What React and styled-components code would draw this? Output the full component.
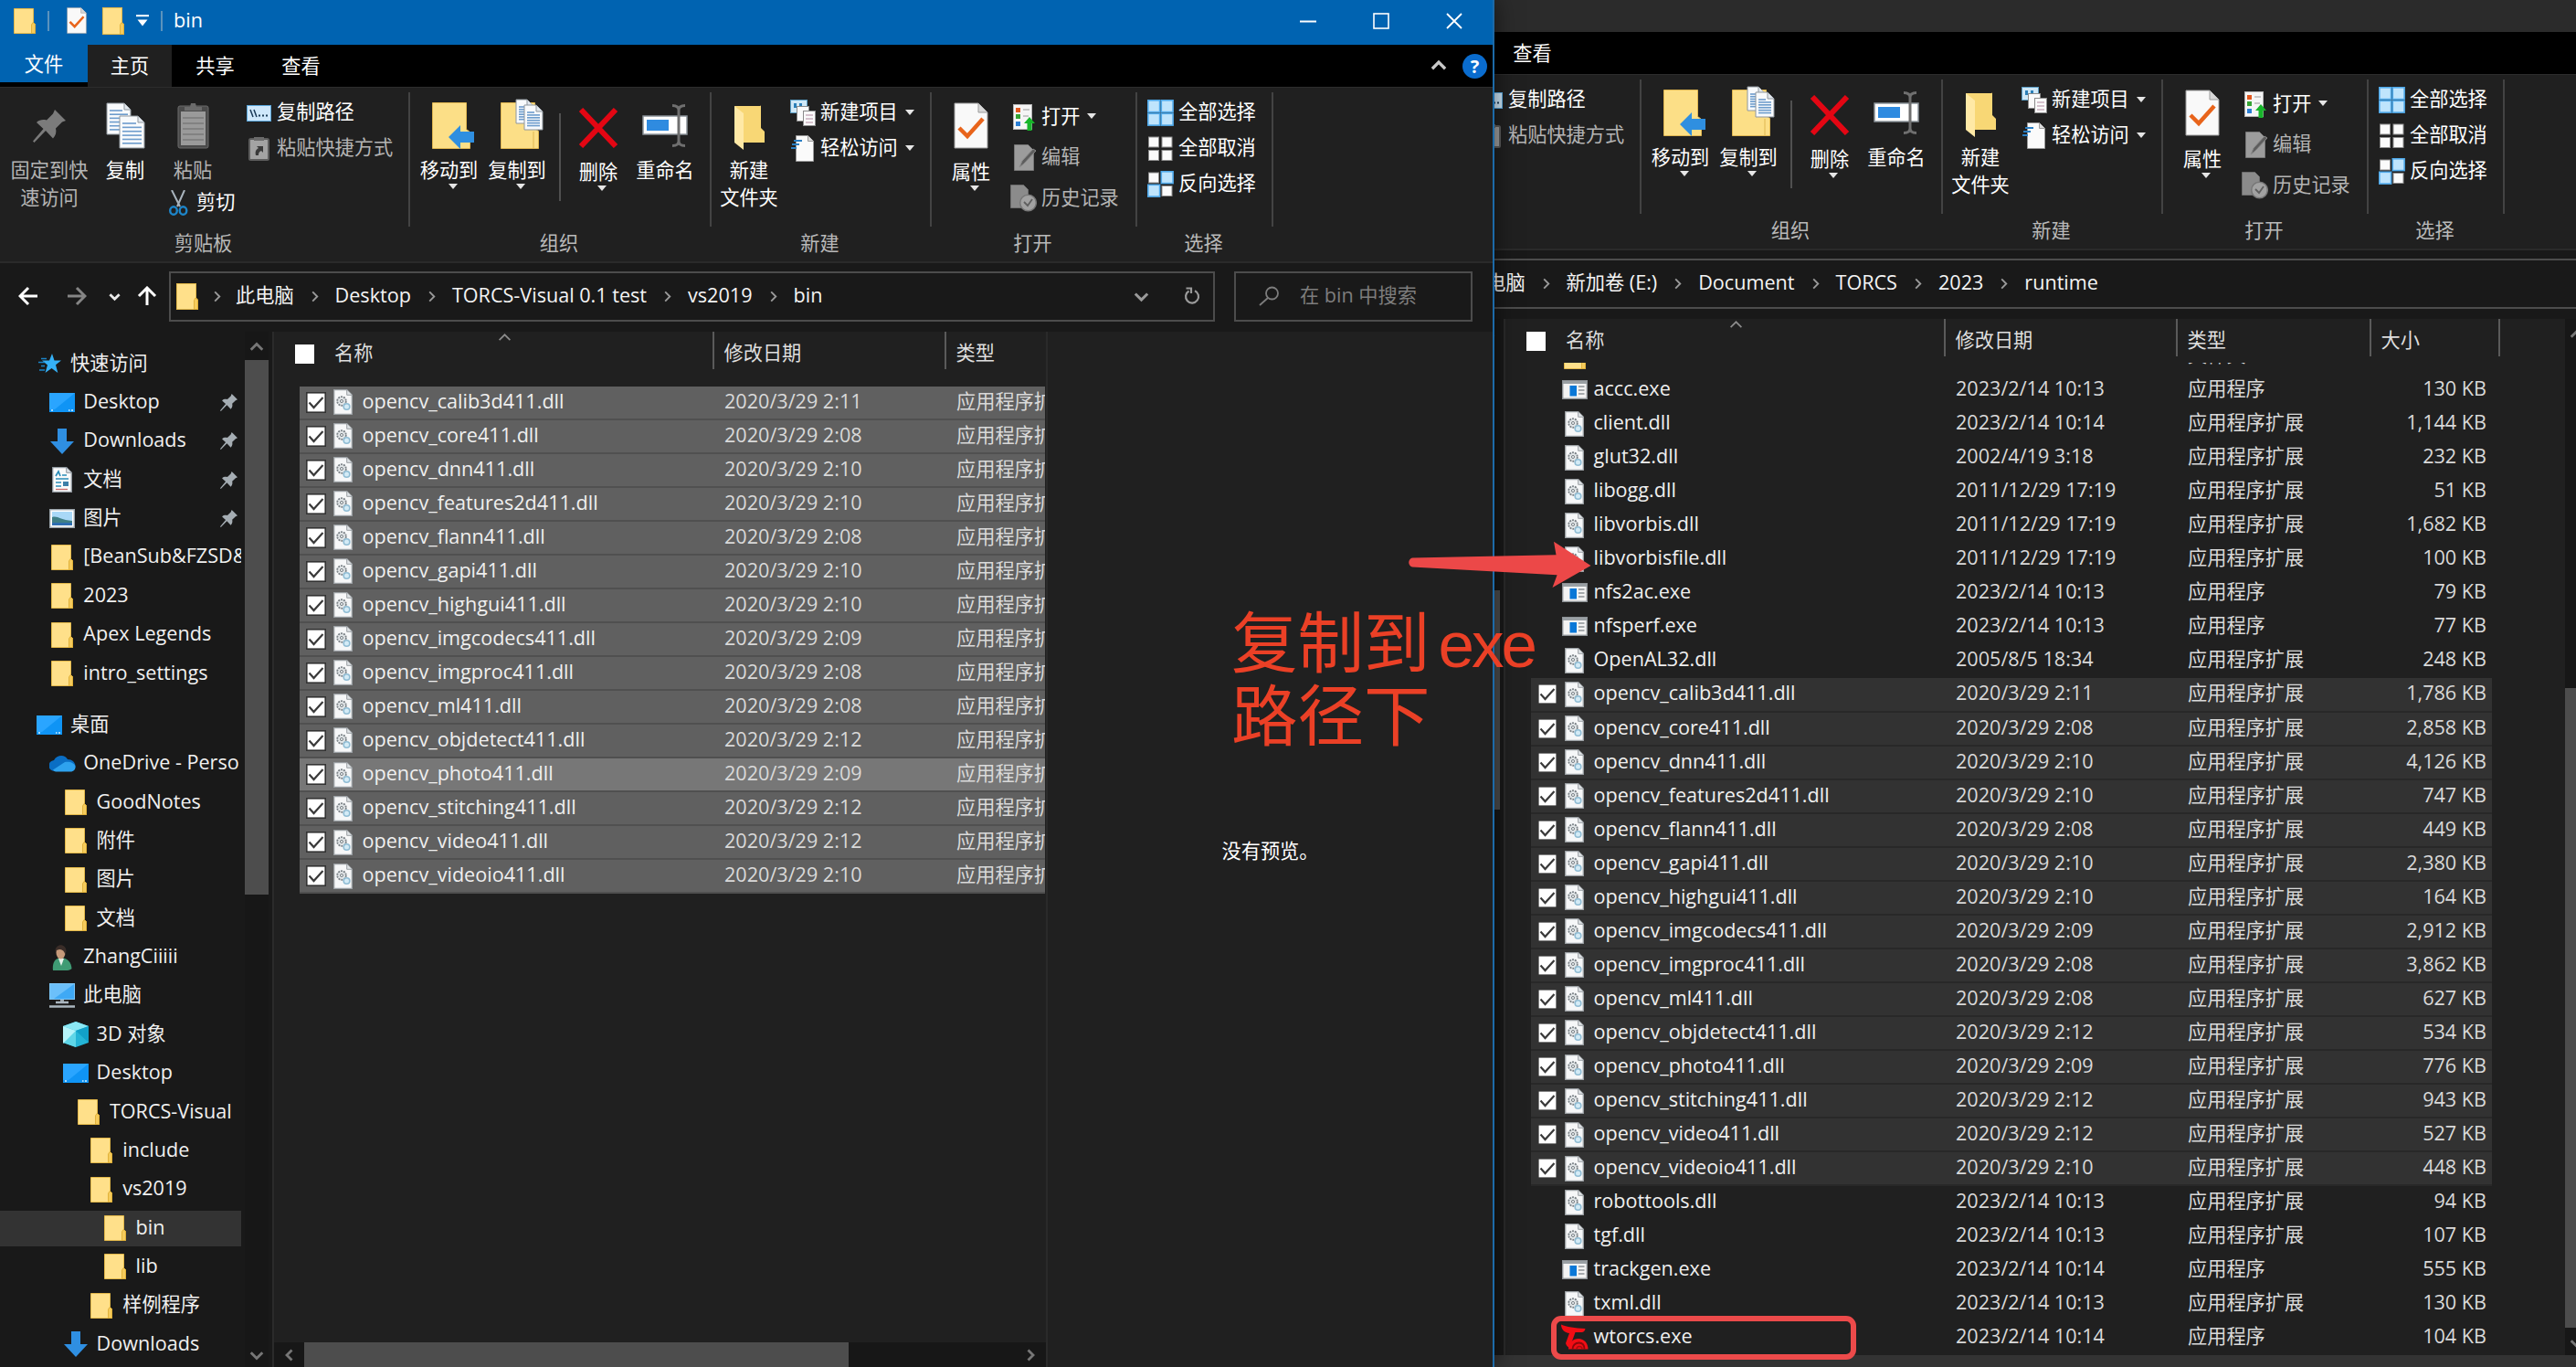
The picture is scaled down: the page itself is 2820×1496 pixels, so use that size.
import React from "react";
import styled, { createGlobalStyle } from "styled-components";

const GlobalStyle = createGlobalStyle`
    * {
        box-sizing: border-box;
    }

    body {
        margin: 0;
        background: #191919;
        color: #f0f0f0;
        font-family: "Open Sans", "Noto Sans CJK SC", sans-serif;
        font-size: 21.2px;
        overflow: hidden;
    }

    svg {
        display: block;
        flex: none;
    }
`;

const Desktop = styled.div`
    position: relative;
    width: 2820px;
    height: 1496px;
    overflow: hidden;
    background: #191919;
`;

const WindowFrame = styled.div`
    position: absolute;
    left: ${p => p.$left}px;
    top: ${p => p.$top}px;
    width: ${p => p.$width}px;
    height: ${p => p.$height}px;
    display: flex;
    flex-direction: column;
    background: #202020;
    border-right: 2px solid #1c6aa8;
    box-shadow: 0 0 24px rgba(0, 0, 0, 0.55);
`;

const Latin = styled.span`
    font-size: 21.6px;
    line-height: 1;
`;

/* ---------- title bar ---------- */

const TitleBar = styled.div`
    height: 49px;
    flex: none;
    display: flex;
    align-items: center;
    padding: 0 33px 4px 15px;
    background: ${p => (p.$active ? "#0063b1" : "#2b2b2b")};
`;

const TitleTools = styled.div`
    display: flex;
    align-items: center;
    flex: 1;
`;

const TitleRule = styled.div`
    width: 2px;
    height: 22px;
    margin: ${p => p.$margin};
    background: #5b93bd;
`;

const TitleSpace = styled.div`
    width: ${p => p.$width}px;
`;

const TitleText = styled.div`
    font-size: 21.6px;
    line-height: 28px;
    padding-bottom: 2px;
    color: #fff;
`;

const Controls = styled.div`
    display: flex;
    align-items: center;
    gap: 62px;
`;

/* ---------- tabs ---------- */

const TabBar = styled.div`
    height: 46px;
    flex: none;
    display: flex;
    align-items: flex-start;
    background: #000;
`;

const Tab = styled.div`
    width: ${p => p.$width}px;
    height: ${p => (p.$kind === "file" ? 41 : 46)}px;
    line-height: ${p => (p.$kind === "file" ? 41 : 45)}px;
    text-align: center;
    color: #fff;
    background: ${p => (p.$kind === "file" ? "#0063b1" : p.$kind === "current" ? "#202020" : "transparent")};
`;

const TabEnd = styled.div`
    margin-left: auto;
    height: 46px;
    padding-right: 6px;
    display: flex;
    align-items: center;
    gap: 17px;
`;

const Help = styled.div`
    width: 27px;
    height: 27px;
    border-radius: 50%;
    background: #0a6cce;
    color: #fff;
    font-size: 20px;
    font-weight: 700;
    line-height: 27px;
    text-align: center;
`;

/* ---------- ribbon ---------- */

const RibbonBar = styled.div`
    height: 193px;
    flex: none;
    display: flex;
    background: #202020;
    border-top: 1px solid #2d2d2d;
    border-bottom: 2px solid #2a2a2a;
`;

const Group = styled.div`
    width: ${p => p.$width}px;
    height: 187px;
    flex: none;
    display: flex;
    flex-direction: column;
    background: linear-gradient(#434343, #434343) right 5px / 2px 147px no-repeat;
    background-position: right 0 top 5px;
`;

const GroupBody = styled.div`
    height: 150px;
    padding: 13px 0 0 ${p => p.$pad}px;
    display: flex;
    align-items: flex-start;
`;

const GroupName = styled.div`
    height: 37px;
    padding-right: 4px;
    line-height: 39px;
    text-align: center;
    color: #b9b9b9;
`;

const BigButton = styled.div`
    width: ${p => p.$width}px;
    flex: none;
    display: flex;
    flex-direction: column;
    align-items: center;
    padding-top: ${p => p.$drop || 0}px;
    color: ${p => (p.$off ? "#b4b4b4" : "#fff")};
    line-height: 30px;
    white-space: nowrap;
`;

const BigIcon = styled.div`
    height: ${p => 62 - (p.$drop || 0)}px;
    padding-bottom: ${p => (p.$low || 9) - 1}px;
    display: flex;
    align-items: flex-end;
`;

const BigArrow = styled.div`
    margin-left: 8px;
`;

const Column = styled.div`
    width: 74px;
    flex: none;
`;

const SmallList = styled.div`
    margin-left: ${p => p.$gap}px;
    margin-top: ${p => p.$shift}px;
`;

const SmallButton = styled.div`
    height: ${p => p.$height}px;
    margin-left: ${p => p.$indent || 0}px;
    margin-top: ${p => p.$down || 0}px;
    display: flex;
    align-items: center;
    gap: ${p => p.$gap || 5}px;
    white-space: nowrap;
    line-height: 28px;
    color: ${p => (p.$off ? "#b4b4b4" : "#fff")};
`;

const SmallText = styled.span`
    padding-bottom: 3px;
`;

const SmallIcon = styled.div`
    width: ${p => p.$width || 29}px;
    flex: none;
    display: flex;
    justify-content: center;
`;

const DropMark = styled.div`
    margin-left: 3px;
    padding-bottom: 2px;
`;

const InnerRule = styled.div`
    width: 2px;
    height: 96px;
    margin: 15px 6px 0 9px;
    background: #505050;
`;

/* ---------- navigation bar ---------- */

const NavBar = styled.div`
    height: 75px;
    flex: none;
    display: flex;
    align-items: center;
    padding: 0 22px 3px 20px;
    background: #191919;
`;

const NavButtons = styled.div`
    width: 165px;
    display: flex;
    align-items: center;
`;

const NavGap = styled.div`
    width: ${p => p.$width}px;
`;

const Address = styled.div`
    height: 55px;
    flex: 1;
    display: flex;
    align-items: center;
    padding: 0 13px 0 6px;
    border: 2px solid #4c4c4c;
    color: #f4f4f4;
`;

const Crumb = styled.div`
    display: flex;
    align-items: center;
    white-space: nowrap;
    line-height: 30px;
`;

const BarText = styled.span`
    line-height: 30px;
    padding-bottom: 3px;
`;

const CrumbMark = styled.div`
    width: ${p => p.$width || 45}px;
    display: flex;
    justify-content: center;
`;

const AddressEnd = styled.div`
    margin-left: auto;
    display: flex;
    align-items: center;
    gap: 37px;
`;

const Search = styled.div`
    width: 261px;
    height: 55px;
    margin-left: 21px;
    padding-left: 24px;
    display: flex;
    align-items: center;
    gap: 22px;
    border: 2px solid #4c4c4c;
    color: #7d7d7d;
    white-space: nowrap;
`;

/* ---------- body ---------- */

const Body = styled.div`
    flex: 1;
    min-height: 0;
    display: flex;
`;

const Sidebar = styled.div`
    width: 300px;
    flex: none;
    display: flex;
    background: #191919;
    border-right: 2px solid #2b2b2b;
`;

const Tree = styled.div`
    width: 264px;
    padding-top: 14px;
    overflow: hidden;
`;

const TreeRow = styled.div`
    height: 42.36px;
    display: flex;
    align-items: center;
    padding-left: ${p => 40 + p.$level * 14.3}px;
    margin-top: ${p => (p.$spaced ? 14 : 0)}px;
    white-space: nowrap;
    background: ${p => (p.$current ? "linear-gradient(#333, #333) 0 2px / 100% 39px no-repeat" : "none")};
`;

const TreeIcon = styled.div`
    width: 28px;
    margin-right: 9px;
    flex: none;
    display: flex;
    justify-content: center;
`;

const TreeText = styled.div`
    flex: 1;
    min-width: 0;
    line-height: 36px;
    padding-bottom: 3px;
    overflow: hidden;
`;

const PinMark = styled.div`
    margin-right: 4px;
`;

const VerticalBar = styled.div`
    width: 26px;
    margin-left: ${p => p.$gap || 0}px;
    flex: none;
    display: flex;
    flex-direction: column;
    align-items: center;
    justify-content: space-between;
    background: #171717;
    padding: ${p => p.$pad};
`;

const VerticalThumb = styled.div`
    width: 26px;
    height: ${p => p.$height}px;
    margin-top: ${p => p.$offset}px;
    margin-bottom: auto;
    background: #4d4d4d;
`;

const ListPane = styled.div`
    width: ${p => p.$width}px;
    flex: none;
    display: flex;
    flex-direction: column;
    overflow: hidden;
`;

const ListHead = styled.div`
    position: relative;
    height: 48px;
    flex: none;
    display: flex;
    color: #dedede;
`;

const SortMark = styled.div`
    position: absolute;
    left: 245px;
    top: -1px;
`;

const HeadCell = styled.div`
    width: ${p => p.$width}px;
    height: 41px;
    flex: none;
    padding-left: ${p => p.$pad}px;
    display: flex;
    align-items: center;
    padding-top: 8px;
    border-right: 2px solid ${p => (p.$open ? "transparent" : "#5a5a5a")};
    white-space: nowrap;
`;

const HeadText = styled.span`
    line-height: 28px;
    padding-bottom: 3px;
`;

const HeadBox = styled.div`
    width: 21px;
    height: 21px;
    margin-right: 22px;
    background: #fff;
`;

const Rows = styled.div`
    flex: 1;
    min-height: 0;
    overflow: hidden;
    padding-top: ${p => p.$offset}px;
`;

const RowShift = styled.div`
    margin-top: ${p => p.$shift}px;
`;

const rowColors = {
    plain: "transparent",
    picked: "#606060",
    hover: "#777",
    dim: "#323232",
};

const Row = styled.div`
    width: ${p => p.$width}px;
    height: 37.06px;
    margin-left: 28px;
    padding-left: 7px;
    display: flex;
    align-items: center;
    background: ${p => rowColors[p.$look]};
    border-bottom: 2px solid ${p => (p.$look === "plain" ? "transparent" : p.$look === "dim" ? "#282828" : "#505050")};
    white-space: nowrap;
    line-height: 30px;
    overflow: hidden;
`;

const CheckCell = styled.div`
    width: 26px;
    flex: none;
`;

const FileIcon = styled.div`
    width: 29px;
    margin-right: 6.5px;
    flex: none;
    display: flex;
    justify-content: center;
`;

const NameCell = styled.div`
    width: 396.5px;
    flex: none;
    padding-bottom: 3px;
    color: #efefef;
`;

const Cell = styled.div`
    width: ${p => p.$width}px;
    flex: none;
    padding-bottom: 3px;
    color: #d9d9d9;
    text-align: ${p => p.$align || "left"};
`;

const HorizontalBar = styled.div`
    height: 27px;
    flex: none;
    display: flex;
    align-items: center;
    justify-content: space-between;
    padding: 0 10px 0 10px;
    background: #171717;
`;

const HorizontalThumb = styled.div`
    width: 596px;
    height: 27px;
    margin-left: 9px;
    margin-right: auto;
    background: #4d4d4d;
`;

const Preview = styled.div`
    flex: 1;
    border-left: 2px solid #2a2a2a;
    display: flex;
    justify-content: center;
    padding-top: 553px;
    color: #fff;
    line-height: 30px;
`;

const StatusBar = styled.div`
    height: 30px;
    flex: none;
    background: #333;
`;

/* ---------- annotations drawn over the desktop ---------- */

const Note = styled.div`
    position: absolute;
    left: 1348px;
    top: 665px;
    color: #eb4026;
    font-family: "Liberation Sans", "Noto Sans CJK SC", sans-serif;
    font-size: 72.5px;
    line-height: 79px;
    white-space: nowrap;
`;

const NoteLatin = styled.span`
    font-size: 71px;
    letter-spacing: -3px;
    margin-left: 9px;
`;

const Pointer = styled.svg`
    position: absolute;
    left: 1540px;
    top: 590px;
`;

const Frame = styled.div`
    position: absolute;
    left: 1698px;
    top: 1440px;
    width: 334px;
    height: 48px;
    border: 6px solid #ec4a4a;
    border-radius: 11px;
`;

/* ---------- icons ---------- */

const Folder = ({ w = 24, h = 28 }) => (
    <svg width={w} height={h} viewBox="0 0 24 28" preserveAspectRatio="none">
        <path d="M0.5 0.5h21v15l2 2v10h-23z" fill="#ffe08a" stroke="#e3b84a" />
        <path d="M21 15.5l2.5 2v10h-4V18z" fill="#f5cb5c" stroke="#dba92f" strokeWidth="0.8" />
    </svg>
);

const Chevron = ({ dir = "right", size = 14, color = "#9a9a9a", weight = 2 }) => {
    const turn = { right: 0, down: 90, left: 180, up: 270 }[dir];
    return (
        <svg width={size} height={size} viewBox="0 0 14 14">
            <path d="M4.5 1.5L10 7l-5.5 5.5" transform={`rotate(${turn} 7 7)`} fill="none" stroke={color} strokeWidth={weight} />
        </svg>
    );
};

const Triangle = ({ color = "#e6e6e6" }) => (
    <svg width="10" height="6" viewBox="0 0 10 6"><path d="M0 0h10L5 6z" fill={color} /></svg>
);

const Arrow = ({ color, up }) => (
    <svg width="22" height="22" viewBox="0 0 22 22">
        <path d="M21 11H2M11 2l-9 9 9 9" transform={up ? "rotate(90 11 11)" : ""} fill="none" stroke={color} strokeWidth="3" />
    </svg>
);

const Pin = ({ size = 36, color = "#7b7b7b" }) => (
    <svg width={size} height={size} viewBox="0 0 36 36">
        <path d="M24 0l12 12-4 1.500-7 7c1 4 0 8-3 11l-8-8.500L1.500 36 0 34.500 11.500 21 4 14c3-3 7-3.500 11-2.500l7-7z" fill={color} />
    </svg>
);

const Sheet = ({ x = 0, y = 0, w = 26, h = 34 }) => (
    <g transform={`translate(${x} ${y})`}>
        <path d={`M1 1h${w - 9}l7 7v${h - 9}h-${w - 2}z`} fill="#f8fafc" stroke="#8f979e" />
        <path d={`M${w - 8} 1v7h7`} fill="#e2e8ee" stroke="#8f979e" />
        {[0, 1, 2, 3, 4, 5].map(i => (
            <path key={i} d={`M4 ${9 + i * ((h - 13) / 5.5)}h${i === 0 ? w - 14 : w - 8}`} stroke="#6d9ccc" strokeWidth="1.600" />
        ))}
    </g>
);

const CopyIcon = () => (
    <svg width="43" height="51" viewBox="0 0 43 51">
        <Sheet w={28} h={36} />
        <Sheet x={14} y={14} w={29} h={37} />
    </svg>
);

const PasteIcon = () => (
    <svg width="35" height="51" viewBox="0 0 35 51">
        <rect x="1" y="4" width="33" height="46" rx="2" fill="#4b4b4b" stroke="#6a6a6a" />
        <rect x="4" y="10" width="27" height="37" fill="#9a9a9a" />
        <path d="M6 17h23M6 23h23M6 29h23M6 35h23M6 41h23" stroke="#7b7b7b" strokeWidth="1.500" />
        <path d="M8 9V5h6l1-4h5l1 4h6v4z" fill="#6b6b6b" />
    </svg>
);

const Scissors = () => (
    <svg width="21" height="28" viewBox="0 0 21 28">
        <path d="M3 0l9 18M17 0L9 18" stroke="#a9b4bd" strokeWidth="2" fill="none" />
        <ellipse cx="5" cy="22.500" rx="3.800" ry="4.300" fill="none" stroke="#1d85c9" strokeWidth="2.400" />
        <ellipse cx="15.500" cy="22.500" rx="3.800" ry="4.300" fill="none" stroke="#1d85c9" strokeWidth="2.400" />
    </svg>
);

const PathIcon = () => (
    <svg width="27" height="18" viewBox="0 0 27 18">
        <rect x="0.500" y="0.500" width="26" height="17" fill="#cfe8fb" stroke="#5aa7dc" />
        <path d="M4 5l3 8M8 5l3 8" stroke="#1b3a57" strokeWidth="1.500" />
        <path d="M13 11.500h2M17 11.500h2M21 11.500h2" stroke="#1b3a57" strokeWidth="2" />
    </svg>
);

const ShortcutIcon = () => (
    <svg width="23" height="27" viewBox="0 0 23 27">
        <rect x="1" y="3" width="21" height="23" rx="1.500" fill="#a3a3a3" stroke="#5d5d5d" strokeWidth="2" />
        <path d="M6 1h11v4H6z" fill="#6b6b6b" />
        <path d="M8 21c-1-4 0-6 3-8l-2-2h7v7l-2-2c-2 1-3 2-3 5z" fill="#3a3a3a" />
    </svg>
);

const MoveIcon = () => (
    <svg width="57" height="51" viewBox="0 0 57 51">
        <path d="M10.500 0.500h37v29l4 3v18h-41z" fill="#fcdf87" stroke="#dfb651" />
        <path d="M28 38l13-13v7h15v12H41v7z" fill="#2f8fe0" />
    </svg>
);

const CopyToIcon = () => (
    <svg width="57" height="55" viewBox="0 0 57 55">
        <path d="M10.500 4.500h37v28l4 3v19h-41z" fill="#fcdf87" stroke="#dfb651" />
        <path d="M46 36v18" stroke="#dfb651" />
        <Sheet x={26} y={0} w={21} h={28} />
        <Sheet x={35} y={6} w={22} h={29} />
    </svg>
);

const DeleteIcon = () => (
    <svg width="44" height="44" viewBox="0 0 44 44">
        <path d="M3 2l38 40M41 2L3 42" stroke="#e30613" strokeWidth="6" />
    </svg>
);

const RenameIcon = () => (
    <svg width="50" height="47" viewBox="0 0 50 47">
        <rect x="1" y="13" width="48" height="20" fill="#fff" stroke="#8b9299" strokeWidth="1.500" />
        <rect x="5" y="17" width="24" height="12" fill="#2f8be0" />
        <path d="M33 1.500c4 0 7 1 7 5v34c0 4-3 5-7 5M47 1.500c-4 0-7 1-7 5v34c0 4 3 5 7 5" fill="none" stroke="#6f6f6f" strokeWidth="3" />
    </svg>
);

const NewFolderIcon = () => (
    <svg width="34" height="49" viewBox="0 0 34 49">
        <path d="M1 1h29v24l4 4v12H10z" fill="#f8d775" />
        <path d="M1 1l10 8v40L1 41z" fill="#ffe9a6" />
        <path d="M11 9l19-8" stroke="#f8d775" />
    </svg>
);

const NewItemIcon = () => (
    <svg width="28" height="29" viewBox="0 0 28 29">
        <rect x="0.500" y="0.500" width="18" height="14" fill="#cfe8f7" stroke="#5b9dc4" />
        <path d="M4 4h3v5H4zM10 4h3v5h-3z" fill="#2b7fb8" />
        <rect x="7.500" y="7.500" width="13" height="16" fill="#fafafa" stroke="#8b8b8b" />
        <rect x="14.500" y="12.500" width="13" height="16" fill="#fafafa" stroke="#8b8b8b" />
        <path d="M17 17h8M17 21h8M17 25h8" stroke="#b18aa0" />
    </svg>
);

const EasyIcon = () => (
    <svg width="26" height="29" viewBox="0 0 26 29">
        <path d="M5.500 0.500h13l6 6v22h-19z" fill="#fafafa" stroke="#9a9a9a" />
        <path d="M18.500 0.500v6h6" fill="#dcdcdc" stroke="#9a9a9a" />
        <path d="M3 6h9M1 10h8M0 14h6" stroke="#2b7fc4" strokeWidth="2" />
    </svg>
);

const CheckedPage = ({ w = 38, h = 51 }) => (
    <svg width={w} height={h} viewBox="0 0 38 51" preserveAspectRatio="none">
        <path d="M1 1h26l10 10v39H1z" fill="#f9f9f9" stroke="#9c9c9c" />
        <path d="M27 1v10h10" fill="#d8d8d8" stroke="#9c9c9c" />
        <path d="M6 28l9 9 17-19" fill="none" stroke="#e8641b" strokeWidth="4.500" />
    </svg>
);

const OpenIcon = () => (
    <svg width="27" height="29" viewBox="0 0 27 29">
        <rect x="2.500" y="0.500" width="20" height="27" fill="#f5f5f5" stroke="#b5b5b5" />
        <rect x="5" y="4" width="5" height="5" fill="#e2571e" />
        <rect x="5" y="11" width="5" height="5" fill="#35a435" />
        <rect x="5" y="19" width="5" height="5" fill="#2b7fd4" />
        <path d="M13 6h7M13 13h6" stroke="#999" />
        <path d="M20 14l6 7h-3.500v8h-5v-8H14z" fill="#17b52a" />
    </svg>
);

const EditIcon = () => (
    <svg width="26" height="29" viewBox="0 0 26 29">
        <path d="M2.500 0.500h15l6 6v22h-21z" fill="#9c9c9c" stroke="#777" />
        <path d="M8 25l3-7L23 5l3 2-13 14z" fill="#5d5d5d" stroke="#8a8a8a" />
    </svg>
);

const HistoryIcon = () => (
    <svg width="29" height="30" viewBox="0 0 29 30">
        <path d="M0.500 0.500h14l5 5v20H0.500z" fill="#8b8b8b" stroke="#6d6d6d" />
        <circle cx="19.500" cy="20" r="8.800" fill="#a2a2a2" stroke="#777" strokeWidth="1.500" />
        <path d="M15 19l4 4 5-7" fill="none" stroke="#5f5f5f" strokeWidth="1.800" />
    </svg>
);

const Squares = ({ filled }) => (
    <svg width="29" height="29" viewBox="0 0 29 29">
        {[[0, 0], [1, 0], [0, 1], [1, 1]].map(([x, y], i) => filled[i] ? (
            <rect key={i} x={x * 14.500 + 0.800} y={y * 14.500 + 0.800} width="12.800" height="12.800" fill="#bfe4fc" stroke="#4fa9ea" strokeWidth="1.600" />
        ) : (
            <rect key={i} x={x * 14.500 + 1.500} y={y * 14.500 + 2} width="11" height="11" fill="#fbfbfb" stroke="#8f8f8f" />
        ))}
    </svg>
);

const DllIcon = () => (
    <svg width="21" height="28" viewBox="0 0 21 28">
        <path d="M0.700 0.700h14l5.600 5.600v21H0.700z" fill="#f6f7f8" stroke="#9a9fa3" strokeWidth="1.300" />
        <path d="M14.700 0.700v5.600h5.600" fill="#dfe3e6" stroke="#9a9fa3" />
        <circle cx="9" cy="13" r="4.800" fill="#e4e8ea" stroke="#7d8489" strokeWidth="1.800" strokeDasharray="2 1" />
        <circle cx="9" cy="13" r="1.600" fill="none" stroke="#7d8489" />
        <circle cx="14.500" cy="19" r="3.300" fill="#d4ebf6" stroke="#8fbcd4" strokeWidth="1.600" />
    </svg>
);

const ExeIcon = () => (
    <svg width="28" height="21" viewBox="0 0 28 21">
        <rect x="0.700" y="0.700" width="26.600" height="19.600" fill="#f3f3f3" stroke="#8d9296" strokeWidth="1.400" />
        <path d="M1 2.500h26" stroke="#9aa0a4" strokeWidth="3" />
        <rect x="8.500" y="6" width="7.500" height="11.500" fill="#0a78d7" />
        <path d="M18 7h6.500M18 11h6.500M18 15h6.500" stroke="#8d9296" strokeWidth="1.500" />
    </svg>
);

const TorcsIcon = () => (
    <svg width="30" height="29" viewBox="0 0 30 29">
        <path d="M0 0.500c6 2.500 15 4 26.500 4.500-0.500 2.500-2 4-4 4h-7L13 16l-4 10c-2-1-3.500-3-4-5l4-11C4 9.500 0 6 0 0.500z" fill="#f20d14" />
        <path d="M8 27.500c0-7 5-11.500 11-11.500s10.500 5 10.500 11.500z" fill="#f20d14" />
        <path d="M12.500 27.500c0-4 3-7 7-7s6 3 6 7" fill="none" stroke="#8c070b" strokeWidth="1.800" />
        <path d="M17 27.500c0-2 1-3 3-3s3 1 3 3" fill="none" stroke="#a80a0e" strokeWidth="1.500" />
    </svg>
);

const CheckBox = () => (
    <svg width="22" height="23" viewBox="0 0 22 23">
        <rect x="0.800" y="0.800" width="20.400" height="21.400" fill="#fff" stroke="#333" strokeWidth="1.600" />
        <path d="M3.500 11.500l5 5.500 10-11" fill="none" stroke="#3a3a3a" strokeWidth="2.200" />
    </svg>
);

const StarIcon = () => (
    <svg width="26" height="22" viewBox="0 0 26 22">
        <path d="M16 0l2.500 7.500H26l-6 4.800 2.300 8.700-6.800-5-7 5 2.500-8.500L5 7.500h8z" fill="#35b0f5" />
        <path d="M4 5.500h6M1 9.500h7M4 13.500h4M2 18h6" stroke="#1b84c8" strokeWidth="1.500" />
    </svg>
);

const DesktopIcon = () => (
    <svg width="28" height="21" viewBox="0 0 28 21">
        <rect width="28" height="21" fill="#0f94f5" />
        <path d="M0 0h28L6 18H0z" fill="#2aa5ff" />
        <path d="M2 19h2M21 19h1.500M24 19h2" stroke="#d5efff" strokeWidth="1.500" />
    </svg>
);

const DownIcon = () => (
    <svg width="26" height="28" viewBox="0 0 26 28"><path d="M8 0h10v14h8L13 28 0 14h8z" fill="#2f8fe2" /></svg>
);

const DocIcon = () => (
    <svg width="22" height="28" viewBox="0 0 22 28">
        <path d="M0.700 0.700h15l5.600 5.600v21H0.700z" fill="#fafafa" stroke="#8f979e" strokeWidth="1.300" />
        <path d="M15.700 0.700v5.600h5.600" fill="#dde3e8" stroke="#8f979e" />
        <path d="M4 10l3-5 2 5M11 9h5M4 13h14M4 17h6M4 21h6" stroke="#2a8cb8" strokeWidth="1.700" fill="none" />
        <rect x="12" y="16" width="6" height="5" fill="#3d7fa8" />
        <path d="M4 24.500h13" stroke="#c96a6a" strokeWidth="1.300" />
    </svg>
);

const PictureIcon = () => (
    <svg width="28" height="21" viewBox="0 0 28 21">
        <rect x="0.700" y="0.700" width="26.600" height="19.600" fill="#fff" stroke="#9aa3aa" strokeWidth="1.400" />
        <rect x="3" y="3" width="22" height="15" fill="#a9d8f7" />
        <path d="M3 9c6-2 9 3 22 4v5H3z" fill="#3f7f86" />
        <path d="M3 15h22v3H3z" fill="#2d6db0" />
    </svg>
);

const CloudIcon = () => (
    <svg width="29" height="19" viewBox="0 0 29 19">
        <path d="M6 18a6 6 0 0 1-1-12C8 0 17-1 20 5c5 0 8 3 8.500 7 0 4-2 6-5.500 6z" fill="#0a6ec4" />
        <path d="M4 16.500L17 8c5-1 11 1 11.500 5 0 3-2 5.500-5.500 5.500H7c-1 0-2-1-3-2z" fill="#2ea2ee" />
    </svg>
);

const UserIcon = () => (
    <svg width="22" height="28" viewBox="0 0 22 28">
        <path d="M1 28c-1-8 2-13 8-14 8 0 12 5 12.500 12-3 3-14 3-20.500 2z" fill="#3f9b74" />
        <path d="M7 15l3 8 3-8z" fill="#e8f2ec" />
        <ellipse cx="9.500" cy="8.500" rx="5" ry="7" fill="#c69a7a" />
        <path d="M3.500 7c0-9 12-9 12 0l-1 4c-1-4-3-6-6-6-2 0-4 1-5 2z" fill="#3a2d28" />
    </svg>
);

const ComputerIcon = () => (
    <svg width="28" height="27" viewBox="0 0 28 27">
        <rect x="0.500" y="0.500" width="27" height="17" fill="#3fa9f5" stroke="#7cc6f8" />
        <path d="M1 1h26L5 17H1z" fill="#6cc0fa" />
        <path d="M12 18h4v4h-4z" fill="#9ba7b0" />
        <path d="M7 21h14M0 25.500h28" stroke="#aab6bf" strokeWidth="2.500" />
    </svg>
);

const CubeIcon = () => (
    <svg width="28" height="28" viewBox="0 0 28 28">
        <path d="M14 0l14 5v18l-14 5-14-5V5z" fill="#24b4d6" />
        <path d="M14 0l14 5-14 5L0 5z" fill="#8be8f4" />
        <path d="M0 5l14 5v18L0 23z" fill="#5fd6e8" />
        <path d="M0 5l14 5-14 14z" fill="#b6f4fa" />
        <path d="M14 10l14-5v18z" fill="#12a0c8" />
    </svg>
);

const icons = {
    star: StarIcon,
    desktop: DesktopIcon,
    down: DownIcon,
    doc: DocIcon,
    picture: PictureIcon,
    folder: Folder,
    cloud: CloudIcon,
    user: UserIcon,
    computer: ComputerIcon,
    cube: CubeIcon,
    dll: DllIcon,
    exe: ExeIcon,
    torcs: TorcsIcon,
};

/* ---------- data ---------- */

const tree = [
    { icon: "star", text: "快速访问", level: 0 },
    { icon: "desktop", text: "Desktop", level: 1, pin: true },
    { icon: "down", text: "Downloads", level: 1, pin: true },
    { icon: "doc", text: "文档", level: 1, pin: true },
    { icon: "picture", text: "图片", level: 1, pin: true },
    { icon: "folder", text: "[BeanSub&FZSD&", level: 1 },
    { icon: "folder", text: "2023", level: 1 },
    { icon: "folder", text: "Apex Legends", level: 1 },
    { icon: "folder", text: "intro_settings", level: 1 },
    { icon: "desktop", text: "桌面", level: 0, spaced: true },
    { icon: "cloud", text: "OneDrive - Perso", level: 1 },
    { icon: "folder", text: "GoodNotes", level: 2 },
    { icon: "folder", text: "附件", level: 2 },
    { icon: "folder", text: "图片", level: 2 },
    { icon: "folder", text: "文档", level: 2 },
    { icon: "user", text: "ZhangCiiiii", level: 1 },
    { icon: "computer", text: "此电脑", level: 1 },
    { icon: "cube", text: "3D 对象", level: 2 },
    { icon: "desktop", text: "Desktop", level: 2 },
    { icon: "folder", text: "TORCS-Visual", level: 3 },
    { icon: "folder", text: "include", level: 4 },
    { icon: "folder", text: "vs2019", level: 4 },
    { icon: "folder", text: "bin", level: 5, current: true },
    { icon: "folder", text: "lib", level: 5 },
    { icon: "folder", text: "样例程序", level: 4 },
    { icon: "down", text: "Downloads", level: 2 },
];

const opencv = [
    ["calib3d", "2:11", "1,786"],
    ["core", "2:08", "2,858"],
    ["dnn", "2:10", "4,126"],
    ["features2d", "2:10", "747"],
    ["flann", "2:08", "449"],
    ["gapi", "2:10", "2,380"],
    ["highgui", "2:10", "164"],
    ["imgcodecs", "2:09", "2,912"],
    ["imgproc", "2:08", "3,862"],
    ["ml", "2:08", "627"],
    ["objdetect", "2:12", "534"],
    ["photo", "2:09", "776"],
    ["stitching", "2:12", "943"],
    ["video", "2:12", "527"],
    ["videoio", "2:10", "448"],
].map(([name, time, size]) => ({
    name: `opencv_${name}411.dll`,
    date: `2020/3/29 ${time}`,
    size: `${size} KB`,
    checked: true,
}));

const binFiles = opencv.map(file => ({
    ...file,
    look: file.name.includes("photo") ? "hover" : "picked",
}));

const runtimeFiles = [
    { name: "", icon: "folder", date: "2023/2/14", type: "文件夹", size: "" },
    { name: "accc.exe", date: "2023/2/14 10:13", size: "130 KB" },
    { name: "client.dll", date: "2023/2/14 10:14", size: "1,144 KB" },
    { name: "glut32.dll", date: "2002/4/19 3:18", size: "232 KB" },
    { name: "libogg.dll", date: "2011/12/29 17:19", size: "51 KB" },
    { name: "libvorbis.dll", date: "2011/12/29 17:19", size: "1,682 KB" },
    { name: "libvorbisfile.dll", date: "2011/12/29 17:19", size: "100 KB" },
    { name: "nfs2ac.exe", date: "2023/2/14 10:13", size: "79 KB" },
    { name: "nfsperf.exe", date: "2023/2/14 10:13", size: "77 KB" },
    { name: "OpenAL32.dll", date: "2005/8/5 18:34", size: "248 KB" },
    ...opencv.map(file => ({ ...file, look: "dim" })),
    { name: "robottools.dll", date: "2023/2/14 10:13", size: "94 KB" },
    { name: "tgf.dll", date: "2023/2/14 10:13", size: "107 KB" },
    { name: "trackgen.exe", date: "2023/2/14 10:14", size: "555 KB" },
    { name: "txml.dll", date: "2023/2/14 10:13", size: "130 KB" },
    { name: "wtorcs.exe", icon: "torcs", date: "2023/2/14 10:14", size: "104 KB" },
];

/* ---------- components ---------- */

// Latin and Chinese runs have their own sizes
function Label({ text }) {
    return text.split(/([\u4e00-\u9fff。]+)/).map((part, i) => (
        i % 2 ? part : part && <Latin key={i}>{part}</Latin>
    ));
}

function Big({ icon, lines, width, off, arrow, drop, low }) {
    return (
        <BigButton $width={width} $off={off} $drop={drop}>
            <BigIcon $low={low} $drop={drop ? drop - 2 : 0}>{icon}</BigIcon>
            {lines.map(line => <div key={line}>{line}</div>)}
            {arrow && <BigArrow><Triangle /></BigArrow>}
        </BigButton>
    );
}

function Small({ icon, text, height, off, arrow }) {
    return (
        <SmallButton $height={height} $off={off}>
            <SmallIcon>{icon}</SmallIcon>
            <SmallText>{text}</SmallText>
            {arrow && <DropMark><Triangle /></DropMark>}
        </SmallButton>
    );
}

function Ribbon() {
    return (
        <RibbonBar>
            <Group $width={449}>
                <GroupBody $pad={9}>
                    <Big icon={<Pin />} lines={["固定到快", "速访问"]} width={90} off low={16} />
                    <Big icon={<CopyIcon />} lines={["复制"]} width={76} />
                    <Column>
                        <Big icon={<PasteIcon />} lines={["粘贴"]} width={72} off />
                        <SmallButton $height={30} $indent={10} $down={6} $gap={9}>
                            <SmallIcon $width={21}><Scissors /></SmallIcon>
                            <SmallText>剪切</SmallText>
                        </SmallButton>
                    </Column>
                    <SmallList $gap={20} $shift={-5}>
                        <Small icon={<PathIcon />} text="复制路径" height={39} />
                        <Small icon={<ShortcutIcon />} text="粘贴快捷方式" height={39} off />
                    </SmallList>
                </GroupBody>
                <GroupName>剪贴板</GroupName>
            </Group>
            <Group $width={330}>
                <GroupBody $pad={5}>
                    <Big icon={<MoveIcon />} lines={["移动到"]} width={75} arrow />
                    <Big icon={<CopyToIcon />} lines={["复制到"]} width={74} arrow />
                    <InnerRule />
                    <Big icon={<DeleteIcon />} lines={["删除"]} width={70} arrow drop={1} low={12} />
                    <Big icon={<RenameIcon />} lines={["重命名"]} width={76} low={11} />
                </GroupBody>
                <GroupName>组织</GroupName>
            </Group>
            <Group $width={241}>
                <GroupBody $pad={3}>
                    <Big icon={<NewFolderIcon />} lines={["新建", "文件夹"]} width={76} low={8} />
                    <SmallList $gap={6} $shift={-5}>
                        <Small icon={<NewItemIcon />} text="新建项目" height={39} arrow />
                        <Small icon={<EasyIcon />} text="轻松访问" height={39} arrow />
                    </SmallList>
                </GroupBody>
                <GroupName>新建</GroupName>
            </Group>
            <Group $width={225}>
                <GroupBody $pad={5}>
                    <Big icon={<CheckedPage />} lines={["属性"]} width={76} arrow drop={1} low={11} />
                    <SmallList $gap={5} $shift={-3}>
                        <Small icon={<OpenIcon />} text="打开" height={44.5} arrow />
                        <Small icon={<EditIcon />} text="编辑" height={44.5} off />
                        <Small icon={<HistoryIcon />} text="历史记录" height={44.5} off />
                    </SmallList>
                </GroupBody>
                <GroupName>打开</GroupName>
            </Group>
            <Group $width={149}>
                <GroupBody $pad={11}>
                    <SmallList $gap={0} $shift={-5}>
                        <Small icon={<Squares filled={[1, 1, 1, 1]} />} text="全部选择" height={39} />
                        <Small icon={<Squares filled={[0, 0, 0, 0]} />} text="全部取消" height={39} />
                        <Small icon={<Squares filled={[0, 1, 1, 0]} />} text="反向选择" height={39} />
                    </SmallList>
                </GroupBody>
                <GroupName>选择</GroupName>
            </Group>
        </RibbonBar>
    );
}

function Navigation({ path, search }) {
    return (
        <NavBar>
            <NavButtons>
                <Arrow color="#fff" />
                <NavGap $width={31} />
                <svg width="22" height="22" viewBox="0 0 22 22">
                    <path d="M1 11h19M11 2l9 9-9 9" fill="none" stroke="#858585" strokeWidth="3" />
                </svg>
                <NavGap $width={24} />
                <Chevron dir="down" size={13} color="#e8e8e8" weight={3} />
                <NavGap $width={18} />
                <Arrow color="#fff" up />
            </NavButtons>
            <Address>
                <Folder h={29} />
                {path.map((part, i) => (
                    <Crumb key={part}>
                        <CrumbMark $width={i === 0 ? 41 : 45}><Chevron size={13} /></CrumbMark>
                        <BarText><Label text={part} /></BarText>
                    </Crumb>
                ))}
                <AddressEnd>
                    <Chevron dir="down" size={17} weight={2.5} />
                    <svg width="20" height="20" viewBox="0 0 20 20">
                        <path d="M13 4.200a7 7 0 1 1-6.500 0.300M3.500 1.500h5.500v5.500" fill="none" stroke="#9a9a9a" strokeWidth="2.200" />
                    </svg>
                </AddressEnd>
            </Address>
            <Search>
                <svg width="24" height="22" viewBox="0 0 24 22">
                    <circle cx="15.500" cy="8" r="6.500" fill="none" stroke="#7d7d7d" strokeWidth="1.800" />
                    <path d="M11 13l-9 8" stroke="#7d7d7d" strokeWidth="1.800" />
                </svg>
                <BarText><Label text={search} /></BarText>
            </Search>
        </NavBar>
    );
}

function FileRow({ file, width, showSize }) {
    const kind = file.icon || (file.name.endsWith(".exe") ? "exe" : "dll");
    const Icon = icons[kind];
    const type = file.type || (file.name.endsWith(".exe") ? "应用程序" : "应用程序扩展");
    return (
        <Row $width={width} $look={file.look || "plain"}>
            <CheckCell>{file.checked && <CheckBox />}</CheckCell>
            <FileIcon><Icon /></FileIcon>
            <NameCell><Label text={file.name} /></NameCell>
            <Cell $width={254}><Label text={file.date} /></Cell>
            <Cell $width={showSize ? 200 : 130}>{type}</Cell>
            {showSize && <Cell $width={127} $align="right"><Label text={file.size} /></Cell>}
        </Row>
    );
}

function Explorer({ frame, active, title, path, search, nodes, thumb, files, scrolled, columns, paneWidth, rowWidth, children }) {
    return (
        <WindowFrame $left={frame.left} $top={frame.top} $width={frame.width} $height={frame.height}>
            <TitleBar $active={active}>
                {active && (
                    <>
                        <TitleTools>
                            <Folder />
                            <TitleRule $margin="0 19px 0 13px" />
                            <CheckedPage w={22} h={29} />
                            <TitleSpace $width={17} />
                            <Folder h={30} />
                            <TitleSpace $width={13} />
                            <svg width="14" height="13" viewBox="0 0 14 13">
                                <path d="M0 1.200h14" stroke="#fff" strokeWidth="2" />
                                <path d="M1.500 5.500h11L7 12.500z" fill="#fff" />
                            </svg>
                            <TitleRule $margin="0 12px 0 13px" />
                            <TitleText>{title}</TitleText>
                        </TitleTools>
                        <Controls>
                            <svg width="18" height="18"><path d="M0 9.500h18" stroke="#fff" strokeWidth="2" /></svg>
                            <svg width="18" height="18"><rect x="1" y="1" width="16" height="16" fill="none" stroke="#fff" strokeWidth="1.600" /></svg>
                            <svg width="18" height="18"><path d="M1 1l16 16M17 1L1 17" stroke="#fff" strokeWidth="1.800" /></svg>
                        </Controls>
                    </>
                )}
            </TitleBar>
            <TabBar>
                <Tab $width={96} $kind="file">文件</Tab>
                <Tab $width={92} $kind="current">主页</Tab>
                <Tab $width={95}>共享</Tab>
                <Tab $width={93}>查看</Tab>
                <TabEnd>
                    <Chevron dir="up" size={18} color="#c8c8c8" weight={2.6} />
                    <Help>?</Help>
                </TabEnd>
            </TabBar>
            <Ribbon />
            <Navigation path={path} search={search} />
            <Body>
                <Sidebar>
                    <Tree>
                        {nodes.map((node, i) => {
                            const Icon = icons[node.icon];
                            return (
                                <TreeRow key={i} $level={node.level} $spaced={node.spaced} $current={node.current}>
                                    <TreeIcon><Icon /></TreeIcon>
                                    <TreeText><Label text={node.text} /></TreeText>
                                    {node.pin && <PinMark><Pin size={19} color="#a5adb3" /></PinMark>}
                                </TreeRow>
                            );
                        })}
                    </Tree>
                    <VerticalBar $gap={4} $pad="9px 0 5px">
                        <Chevron dir="up" size={16} color="#777" weight={2.5} />
                        <VerticalThumb $offset={thumb.offset} $height={thumb.height} />
                        <Chevron dir="down" size={16} color="#777" weight={2.5} />
                    </VerticalBar>
                </Sidebar>
                <ListPane $width={paneWidth}>
                    <ListHead>
                        <SortMark><Chevron dir="up" size={15} color="#8c8c8c" weight={1.6} /></SortMark>
                        <HeadCell $width={482} $pad={23}><HeadBox /><HeadText>名称</HeadText></HeadCell>
                        {columns.map(col => (
                            <HeadCell key={col.text} $width={col.width} $pad={10.500} $open={col.open}>
                                <HeadText>{col.text}</HeadText>
                            </HeadCell>
                        ))}
                    </ListHead>
                    <Rows $offset={scrolled ? 0 : 11.5}>
                        <RowShift $shift={scrolled ? -25 : 0}>
                            {files.map((file, i) => (
                                <FileRow key={i} file={file} width={rowWidth} showSize={columns.length > 2} />
                            ))}
                        </RowShift>
                    </Rows>
                    {!scrolled && (
                        <HorizontalBar>
                            <Chevron dir="left" size={14} color="#777" weight={2.8} />
                            <HorizontalThumb />
                            <Chevron size={14} color="#777" weight={2.8} />
                        </HorizontalBar>
                    )}
                </ListPane>
                {children}
            </Body>
            {scrolled && <StatusBar />}
        </WindowFrame>
    );
}

export default function App() {
    return (
        <Desktop>
            <GlobalStyle />
            <Explorer
                frame={{ left: 1348, top: -14, width: 1900, height: 1527 }}
                path={["此电脑", "新加卷 (E:)", "Document", "TORCS", "2023", "runtime"]}
                search=""
                nodes={[]}
                thumb={{ offset: 272, height: 240 }}
                files={runtimeFiles}
                scrolled
                columns={[
                    { text: "修改日期", width: 254 },
                    { text: "类型", width: 212 },
                    { text: "大小", width: 141 },
                ]}
                paneWidth={1160}
                rowWidth={1052}
            >
                <VerticalBar $pad="9px 0 5px">
                    <Chevron dir="up" size={16} color="#777" weight={2.5} />
                    <VerticalThumb $offset={379} $height={700} />
                    <Chevron dir="down" size={16} color="#777" weight={2.5} />
                </VerticalBar>
            </Explorer>
            <Explorer
                frame={{ left: 0, top: 0, width: 1636, height: 1496 }}
                active
                title="bin"
                path={["此电脑", "Desktop", "TORCS-Visual 0.1 test", "vs2019", "bin"]}
                search="在 bin 中搜索"
                nodes={tree}
                thumb={{ offset: 6, height: 585 }}
                files={binFiles}
                columns={[
                    { text: "修改日期", width: 254 },
                    { text: "类型", width: 109, open: true },
                ]}
                paneWidth={845}
                rowWidth={816}
            >
                <Preview>没有预览。</Preview>
            </Explorer>
            <Note>
                <div>复制到<NoteLatin>exe</NoteLatin></div>
                <div>路径下</div>
            </Note>
            <Pointer width="204" height="56" viewBox="0 0 204 56">
                <path d="M6 20.500L163.500 17.300 161 2.700 201.500 29 159.500 53 164.600 39.300 6 30.500C1 29 1 22 6 20.500z" fill="#ec4848" />
            </Pointer>
            <Frame />
        </Desktop>
    );
}
